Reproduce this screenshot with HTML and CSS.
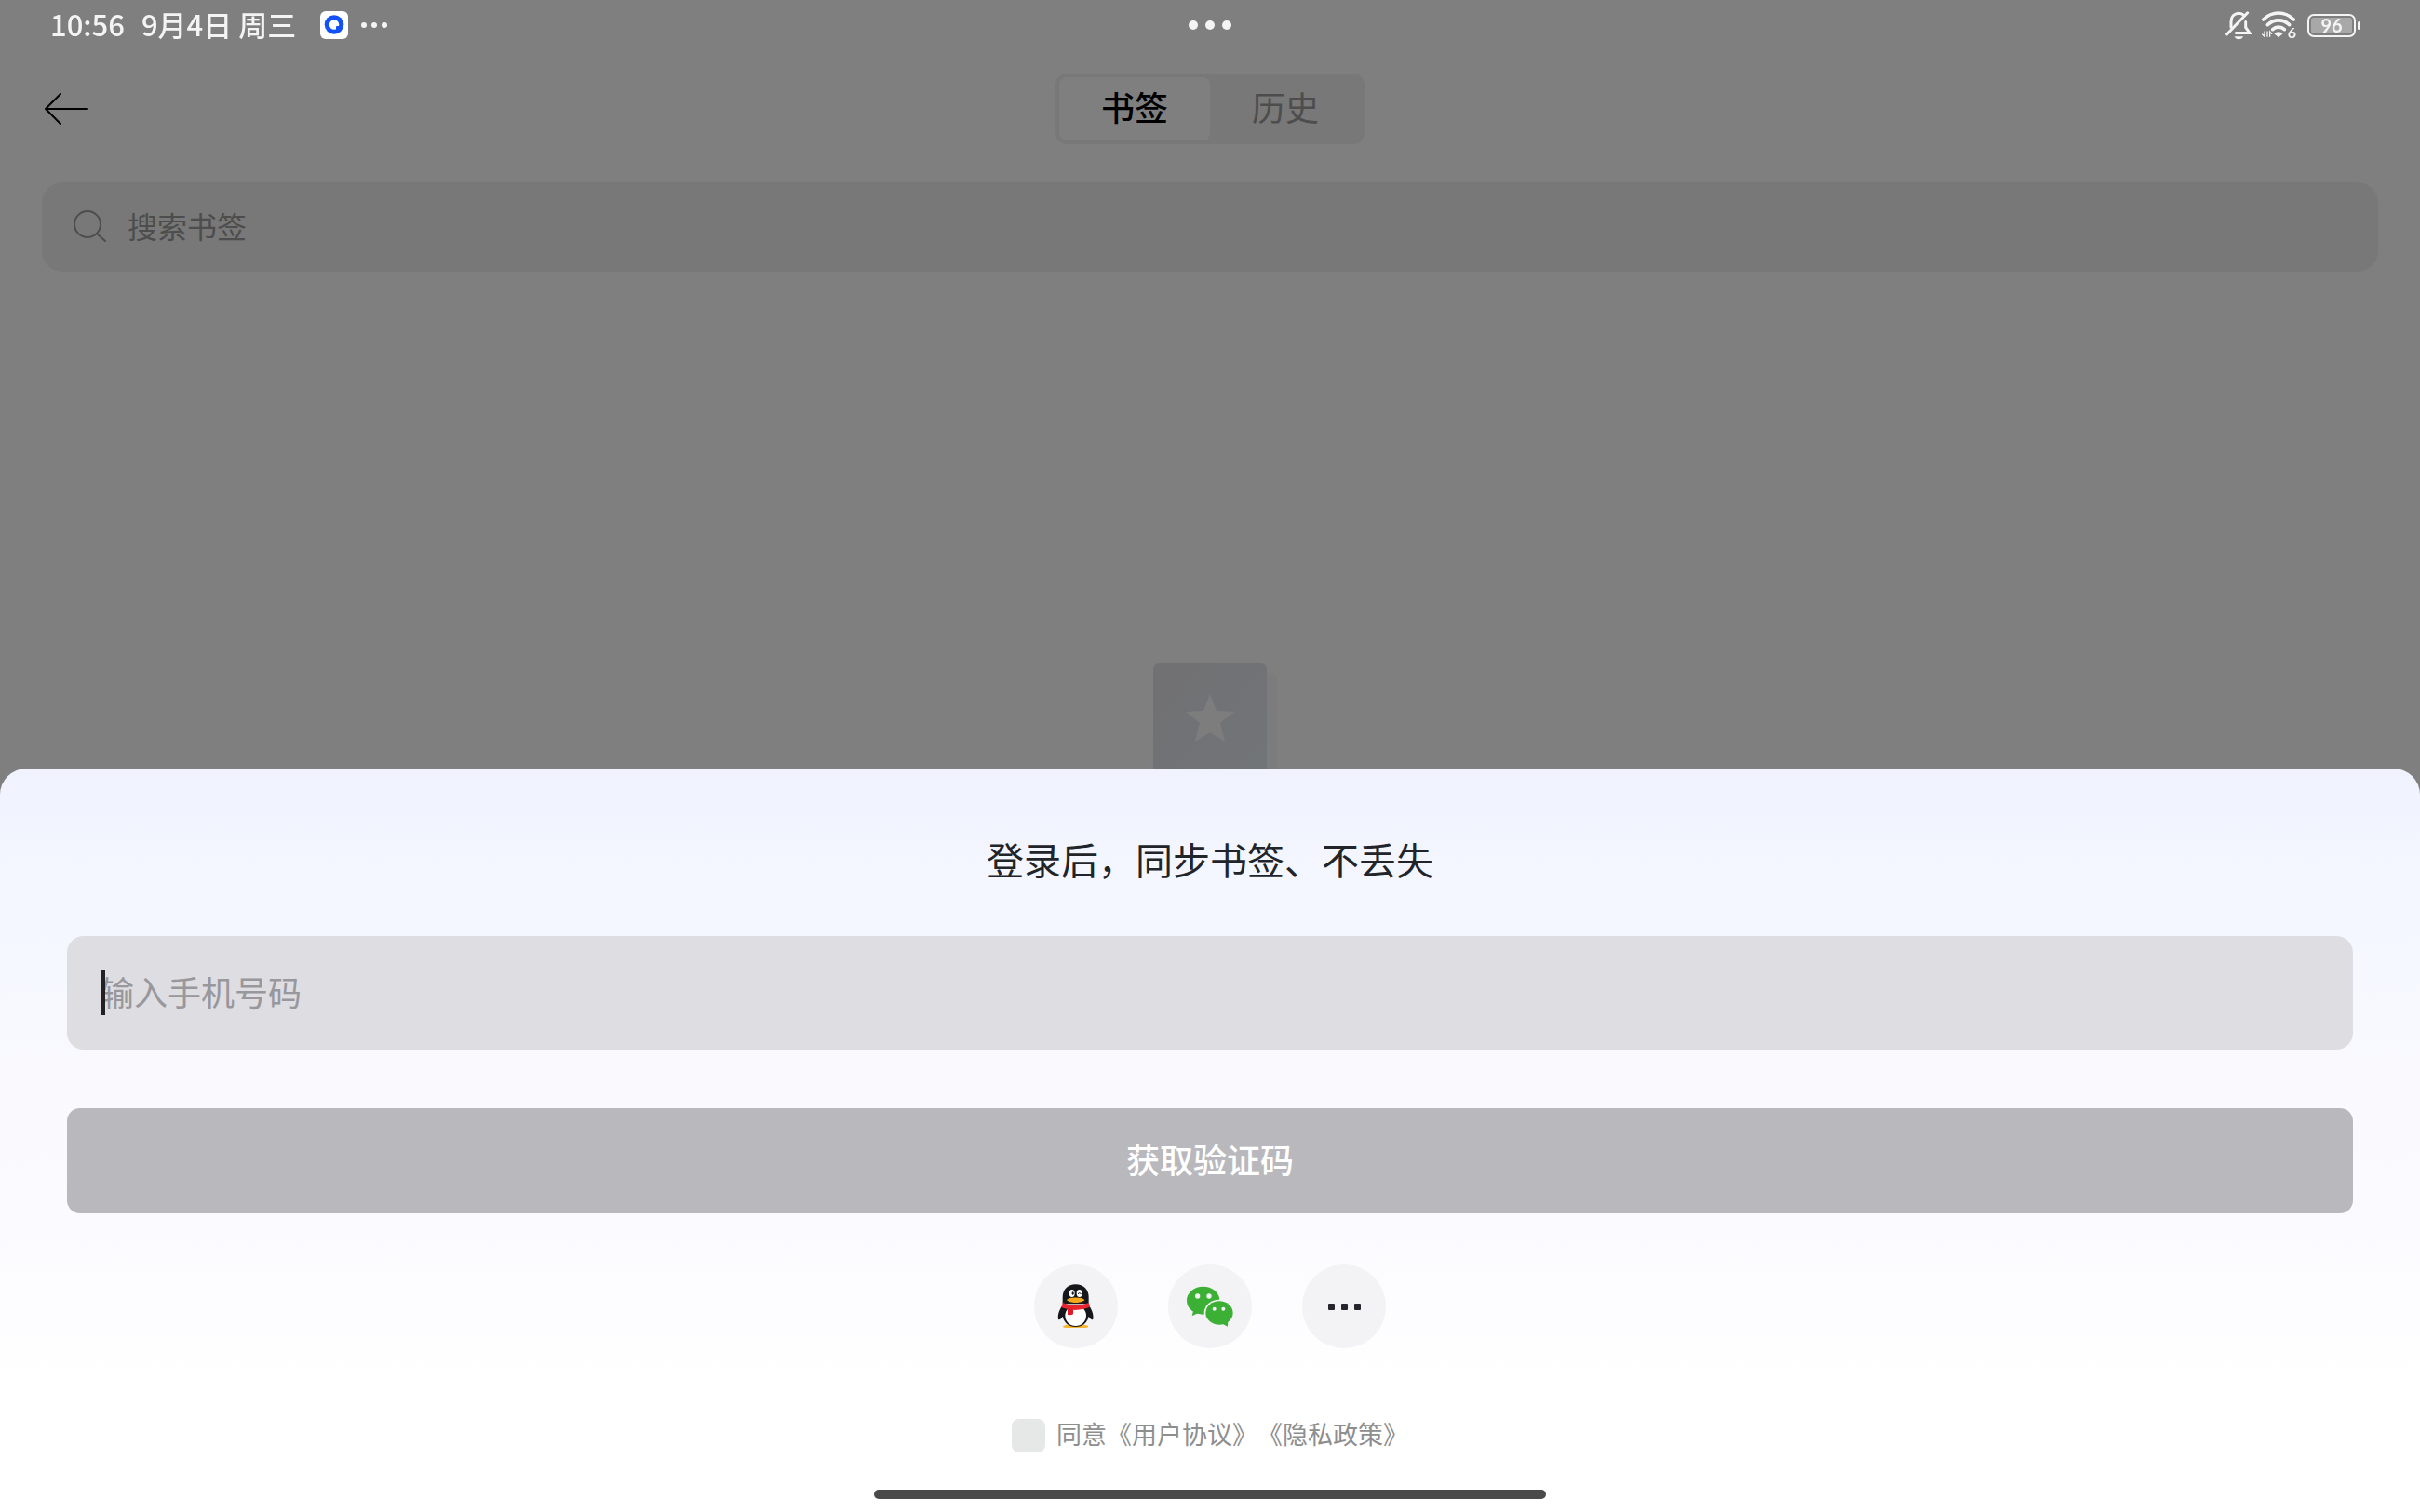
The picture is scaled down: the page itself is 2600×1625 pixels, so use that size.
FILE: index.html
```html
<!DOCTYPE html>
<html lang="zh-CN">
<head>
    <meta charset="UTF-8">
    <meta name="viewport" content="width=device-width, initial-scale=1.0">
    <title>书签</title>
    <link rel="stylesheet" href="styles.css">
</head>
<body>
    <div class="status-bar">
        <div class="status-left">
            <span>10:56</span>
            <span>9月4日 周三</span>
            <svg class="app-icon" viewBox="0 0 30 30">
                <rect width="30" height="30" rx="6" fill="#fff"/>
                <circle cx="15" cy="14.500" r="10.300" fill="#1251f5"/>
                <circle cx="15" cy="14.500" r="5.200" fill="#fff"/>
                <rect x="17" y="16" width="4" height="5" rx="1" fill="#1251f5"/>
            </svg>
            <svg class="more-icon" viewBox="0 0 28 6">
                <circle cx="3" cy="3" r="3"/>
                <circle cx="14" cy="3" r="3"/>
                <circle cx="25" cy="3" r="3"/>
            </svg>
        </div>
        <svg class="window-dots" viewBox="0 0 46 10">
            <circle cx="5" cy="5" r="5"/>
            <circle cx="23" cy="5" r="5"/>
            <circle cx="41" cy="5" r="5"/>
        </svg>
        <div class="status-right">
            <svg class="bell-icon" viewBox="0 0 84 92" fill="none" stroke="#f4f4f4" stroke-width="9" stroke-linecap="round">
                <path d="M18 51V34c0-17 10-27 24-28 8 0 14 3 18 7"/>
                <path d="M65 34v18l13 18H34"/>
                <path d="M5 74L71 5"/>
                <path d="M29 81h28c-3 12-25 12-28 0z" fill="#f4f4f4" stroke="none"/>
            </svg>
            <svg class="wifi-icon" viewBox="0 0 120 108" fill="none" stroke="#f4f4f4" stroke-width="11" stroke-linecap="round">
                <path d="M8 36c28-28 70-28 98 0"/>
                <path d="M22 53c20-19 50-19 70 0"/>
                <path d="M38 68c11-10 27-10 38 0"/>
                <path d="M43 82c7-8 21-8 28 0l-14 12z" fill="#f4f4f4" stroke="none"/>
                <path d="M5 84l7 7V75M21 91V75M29 91V75l6 7" stroke-width="4"/>
                <text class="wifi-gen" x="86" y="96">6</text>
            </svg>
            <div class="battery"><span class="battery-level">96</span></div>
        </div>
    </div>

    <main>
        <div class="header">
            <button class="back" aria-label="返回">
                <svg viewBox="0 0 48 34" fill="none" stroke="#000" stroke-width="2" stroke-linecap="round" stroke-linejoin="round">
                    <path d="M17 1L1 17l16 16M1 17h45"/>
                </svg>
            </button>
            <div class="tabs">
                <button class="tab active">书签</button>
                <button class="tab">历史</button>
            </div>
        </div>

        <label class="search">
            <svg viewBox="0 0 36 36" fill="none" stroke="#9a9a9a" stroke-width="2" stroke-linecap="round">
                <circle cx="15" cy="15" r="14"/>
                <path d="M25 25l9 8"/>
            </svg>
            <input type="text" placeholder="搜索书签" aria-label="搜索书签">
        </label>

        <div class="empty">
            <svg viewBox="0 0 134 140">
                <defs>
                    <linearGradient id="cover" x1="0" y1="0" x2="1" y2="1">
                        <stop offset="0" stop-color="#e2e2e6"/>
                        <stop offset="0.500" stop-color="#e2e5eb"/>
                        <stop offset="1" stop-color="#e5edef"/>
                    </linearGradient>
                </defs>
                <rect x="12" y="10" width="122" height="130" rx="6" fill="#f8f8f8"/>
                <rect x="1" width="122" height="140" rx="6" fill="url(#cover)"/>
                <path d="M62 33l7 18 19 1-15 12 5 20-16-10-16 10 5-20-15-12 19-1z" fill="#fbfbfb"/>
            </svg>
        </div>
    </main>

    <div class="scrim"></div>

    <form class="sheet">
        <h1>登录后，同步书签、不丢失</h1>
        <div class="phone">
            <input type="tel" id="phone" placeholder="输入手机号码" aria-label="输入手机号码">
            <span class="caret"></span>
        </div>
        <button type="button" class="submit">获取验证码</button>

        <div class="socials">
            <button type="button" class="social" aria-label="QQ">
                <svg class="qq" viewBox="0 0 120 144">
                    <path d="M18 135q20-9 40-3 22-6 42 3 0 6-8 6H26q-8 0-8-6z" fill="#f7b52c"/>
                    <path d="M19 66C8 78 0 98 3 113c3 5 10-2 14-9 4 20 20 34 42 34s38-14 42-34c4 7 11 14 14 9 3-15-5-35-16-47z" fill="#15171a"/>
                    <ellipse cx="59" cy="102" rx="34" ry="33" fill="#fff"/>
                    <path d="M17 64V42C17 18 34 1 59 1s42 17 42 41v22z" fill="#15171a"/>
                    <path d="M17 60q42 18 84 0l4 14q-45 19-91 2z" fill="#e7252f"/>
                    <path d="M33 78l18 3v16q-9 5-18 1z" fill="#e01b27"/>
                    <ellipse cx="47" cy="30" rx="9" ry="12" fill="#fff"/>
                    <ellipse cx="71" cy="30" rx="9" ry="12" fill="#fff"/>
                    <ellipse cx="50" cy="30" rx="3.500" ry="5" fill="#15171a"/>
                    <path d="M66 32q5-6 11 0" fill="none" stroke="#15171a" stroke-width="3"/>
                    <path d="M30 51c8-10 50-10 58 0-8 12-50 12-58 0z" fill="#f7a91d"/>
                </svg>
            </button>
            <button type="button" class="social" aria-label="微信">
                <svg class="wechat" viewBox="0 0 150 132">
                    <ellipse cx="53" cy="47" rx="53" ry="45" fill="#3cb035"/>
                    <path d="M22 77l-5 20 22-11z" fill="#3cb035"/>
                    <circle cx="35" cy="33" r="8" fill="#f3f3f6"/>
                    <circle cx="72" cy="33" r="8" fill="#f3f3f6"/>
                    <ellipse cx="105" cy="87" rx="49" ry="43" fill="#f3f3f6"/>
                    <ellipse cx="105" cy="87" rx="44" ry="38" fill="#3cb035"/>
                    <path d="M115 122l17 9 1-20z" fill="#3cb035"/>
                    <circle cx="89" cy="74" r="6" fill="#f3f3f6"/>
                    <circle cx="118" cy="74" r="6" fill="#f3f3f6"/>
                </svg>
            </button>
            <button type="button" class="social" aria-label="更多">
                <svg class="more" viewBox="0 0 35 7" fill="#25252b">
                    <rect width="7" height="7" rx="1"/>
                    <rect x="14" width="7" height="7" rx="1"/>
                    <rect x="28" width="7" height="7" rx="1"/>
                </svg>
            </button>
        </div>

        <div class="agreement">
            <input type="checkbox" id="agree">
            <label for="agree">同意<a href="#">《用户协议》</a><a href="#">《隐私政策》</a></label>
        </div>
        <div class="home-bar"></div>
    </form>
</body>
</html>
```

FILE: styles.css
```css
* {
    box-sizing: border-box;
}

body {
    margin: 0;
    min-height: 100vh;
    background-color: #fff;
    font-family: "Noto Sans CJK SC", sans-serif;
    text-spacing-trim: space-all;
    overflow: hidden;
}

button {
    border: none;
    padding: 0;
    background: none;
    font-family: inherit;
    cursor: pointer;
}

input {
    border: none;
    outline: none;
    background: none;
    font-family: inherit;
}

svg {
    display: block;
}

/* status bar */
.status-bar {
    position: relative;
    z-index: 2;
    display: grid;
    grid-template-columns: 1fr auto 1fr;
    align-items: center;
    height: 54px;
    padding: 0 64px 0 54px;
    color: #f4f4f4;
    fill: #f4f4f4;
}

.status-left {
    display: flex;
    align-items: center;
    gap: 18px;
    font-size: 31px;
    font-weight: 500;
}

.status-left span {
    padding-bottom: 2px;
    line-height: 52px;
}

.app-icon {
    width: 30px;
    height: 30px;
    margin-left: 8px;
}

.more-icon {
    width: 28px;
    height: 6px;
    margin-left: -4px;
}

.window-dots {
    width: 46px;
    height: 10px;
    margin-left: 10px;
}

.status-right {
    display: flex;
    justify-content: flex-end;
    align-items: center;
    gap: 10px;
}

.bell-icon {
    width: 28px;
    height: 31px;
}

.wifi-icon {
    width: 40px;
    height: 36px;
}

.wifi-gen {
    font-family: Lato, sans-serif;
    font-size: 48px;
    font-weight: 700;
    fill: #f4f4f4;
    stroke: none;
}

.battery {
    position: relative;
    width: 52px;
    height: 25px;
    margin-right: 5px;
    padding: 2px;
    border: 2px solid #f4f4f4;
    border-radius: 7px;
}

.battery::after {
    content: "";
    position: absolute;
    top: 6px;
    right: -7px;
    width: 3px;
    height: 9px;
    border-radius: 2px;
    background-color: #f4f4f4;
}

.battery-level {
    display: block;
    border-radius: 3px;
    background-color: #a8a8a8;
    font-family: Lato, sans-serif;
    font-size: 20px;
    font-weight: 700;
    line-height: 17px;
    text-align: center;
}

/* bookmarks page */
.header {
    display: grid;
    grid-template-columns: 1fr auto 1fr;
    align-items: center;
    height: 126px;
    padding: 0 48px;
}

.back svg {
    width: 48px;
    height: 34px;
}

.tabs {
    display: flex;
    width: 332px;
    height: 76px;
    padding: 4px;
    border-radius: 12px;
    background-color: #f0f0f0;
}

.tab {
    flex: 1;
    padding-bottom: 6px;
    border-radius: 8px;
    color: #9a9a9a;
    font-size: 36px;
}

.tab.active {
    background-color: #fff;
    color: #000;
    font-weight: 500;
}

.search {
    display: flex;
    align-items: center;
    gap: 22px;
    height: 96px;
    margin: 16px 45px 0;
    padding: 0 34px;
    border-radius: 22px;
    background-color: #f0f0f0;
}

.search svg {
    width: 36px;
    height: 36px;
}

.search input {
    flex: 1;
    padding: 0 0 4px;
    font-size: 32px;
}

.search input::placeholder {
    color: #9a9a9a;
}

.empty {
    display: flex;
    justify-content: center;
    padding: 421px 0 0 10px;
}

.empty svg {
    width: 134px;
    height: 140px;
}

.scrim {
    position: fixed;
    inset: 0;
    z-index: 1;
    background-color: rgba(0, 0, 0, 0.5);
}

/* login sheet */
.sheet {
    position: fixed;
    left: 0;
    right: 0;
    bottom: 0;
    z-index: 3;
    display: flex;
    flex-direction: column;
    padding: 67px 72px 14px;
    border-radius: 28px 28px 0 0;
    background: linear-gradient(to bottom, #f0f2fe, #f3f6ff 12%, #f5f8ff 26%, #f9f9fe 40%, #fbfbff 62%, #fff 84%);
}

h1 {
    margin: 0 0 53px;
    color: #212429;
    font-size: 40px;
    font-weight: 400;
    line-height: 60px;
    text-align: center;
}

.phone {
    position: relative;
    height: 122px;
    margin-bottom: 63px;
}

.phone input {
    width: 100%;
    height: 100%;
    padding: 0 36px 4px;
    border-radius: 18px;
    background-color: #dedde2;
    font-size: 36px;
}

.phone input::placeholder {
    color: #98979c;
}

.caret {
    position: absolute;
    left: 36px;
    top: 36px;
    width: 5px;
    height: 49px;
    background-color: #212126;
}

.submit {
    height: 113px;
    padding-bottom: 6px;
    border-radius: 14px;
    background-color: #b9b8bd;
    color: #fff;
    font-size: 36px;
    font-weight: 500;
}

.socials {
    display: flex;
    justify-content: center;
    gap: 54px;
    margin: 55px 0 75px;
}

.social {
    display: flex;
    justify-content: center;
    align-items: center;
    width: 90px;
    height: 90px;
    border-radius: 50%;
    background-color: #f3f3f6;
}

.qq {
    width: 40px;
    height: 48px;
}

.wechat {
    width: 50px;
    height: 44px;
}

.more {
    width: 35px;
    height: 7px;
}

.agreement {
    display: flex;
    justify-content: center;
    align-items: center;
    gap: 12px;
    height: 37px;
    margin-bottom: 40px;
    color: #8e8e8e;
    font-size: 27px;
}

.agreement label {
    padding-bottom: 4px;
    line-height: 33px;
}

.agreement input {
    appearance: none;
    width: 36px;
    height: 36px;
    margin: 0;
    border-radius: 8px;
    background-color: #e6e7e7;
}

.agreement a {
    color: inherit;
    text-decoration: none;
}

.home-bar {
    align-self: center;
    width: 722px;
    max-width: 100%;
    height: 10px;
    border-radius: 5px;
    background-color: #4a4a4a;
}
```
